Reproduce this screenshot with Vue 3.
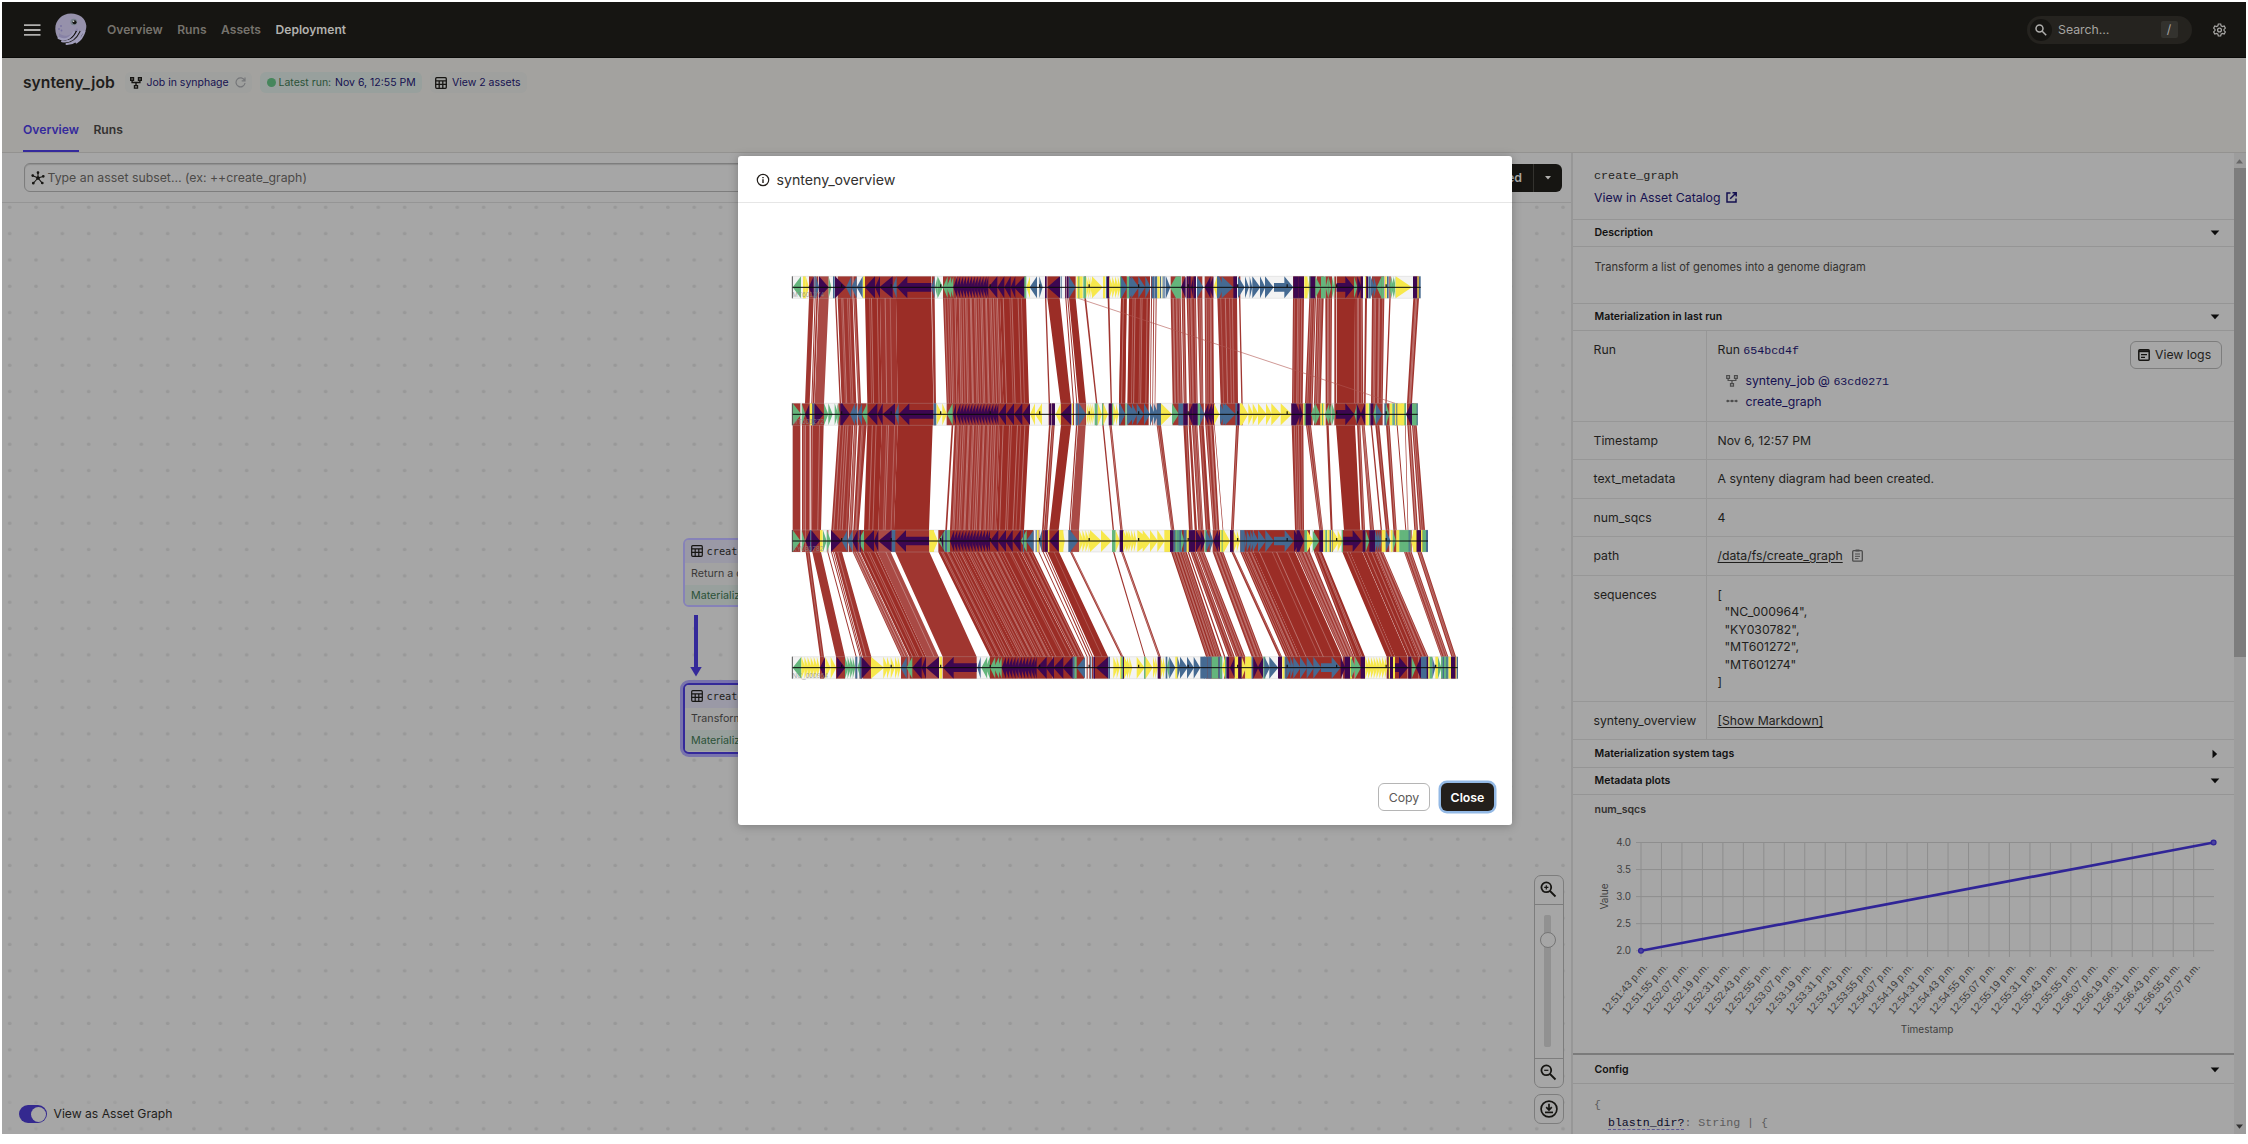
<script setup>
const navItems = ['Overview', 'Runs', 'Assets', 'Deployment']

// Gene features per track: start, end, colour, shape.
// Shapes: < > arrowheads, L R long arrows with a shaft, | plain bars; an optional count repeats the shape.
const colors = { g: '#64b57c', p: '#3d0751', b: '#456a92', y: '#f7e84b' }
const parseFeatures = (text, offset) =>
  text.split(',').flatMap((item) => {
    const [a, b, kind, n] = item.trim().split(' ')
    const count = n ? +n : 1
    const x0 = +a + offset
    const step = (+b - +a) / count
    return Array.from({ length: count }, (_, i) => ({
      fill: colors[kind[0]],
      points: shape(x0 + i * step, x0 + (i + 1) * step + (i < count - 1 ? step * 0.35 : 0), kind[1]),
    }))
  })
function shape(a, b, s) {
  if (s === '>') return `${a},0 ${b},33 ${a},66`
  if (s === '<') return `${b},0 ${a},33 ${b},66`
  if (s === 'L') return `${a},33 ${a + 32},0 ${a + 32},20 ${b},20 ${b},46 ${a + 32},46 ${a + 32},66`
  if (s === 'R') {
    const h = b - 27
    return `${b},33 ${h},0 ${h},20 ${a},20 ${a},46 ${h},46 ${h},66`
  }
  return `${a},0 ${b},0 ${b},66 ${a},66`
}

const tracks = [
  {
    name: 'MT601274', y: 110, end: 1952,
    left: '68 93 g<,99 107 y|,107 117 y>,116 131 p<,133 137 b|,138 147 b>,147 176 p>,176 184 g>,189 194 b|,195 228 p>,228 244 b<,244 260 b<,260 278 b<,279 285 y|,285 315 p<,315 330 p<,328 368 p<,368 380 b<,380 484 pL,484 494 b<,495 503 g<,503 519 g>,519 550 g< 3,550 655 p< 12,655 682 p<,682 703 p<,703 722 p<,722 736 p<,732 764 p<,763 769 g|,769 780 y<,779 801 b<,808 818 b>,825 830 p|,832 870 p<,872 875 b|,886 889 p|,891 896 p|,897 917 b>,920 938 y|,925 928 g|,940 948 g|,949 968 y> 3,966 998 y>,999 1006 y|,1008 1011 b|,1011 1018 p|,1018 1052 y> 4,1053 1070 b>,1071 1079 g|',
    right: '0 3 g|,4 22 b>,27 55 b>,34 57 b>,55 76 b>,76 92 b>,95 103 b|,104 112 b|,112 119 y|,120 123 b|,125 127 y|,128 131 b|,133 136 b|,138 151 b>,150 168 g<,168 183 g|,183 197 p<,200 205 p|,206 212 p|,213 220 p<,221 228 p|,231 250 b>,254 280 p< 2,281 291 y<,291 297 b|,297 312 b>,305 340 b>,340 351 p|,354 374 b>,375 387 b>,389 397 b>,397 421 b>,420 436 b>,435 461 b>,462 520 bR,520 535 p|,535 552 p|,553 562 y|,562 568 y>,568 573 g|,571 586 p|,586 603 g>,603 617 g|,617 625 g<,625 634 g>,636 646 g> 2,650 703 pR,702 712 g>,712 725 p>,722 729 p|,735 739 y|,739 744 p|,745 752 b|,752 770 b> 2,770 785 g<,784 792 g|,795 800 y|,801 806 b|,807 826 g< 3,827 876 y>,879 895 p|,892 896 y|,897 902 b|',
  },
  {
    name: 'MT601272', y: 491, end: 1943,
    left: '68 94 g>,95 106 g>,105 119 p<,119 126 y|,127 133 b|,134 161 p>,162 175 g>,175 188 g>,194 210 g> 2,211 218 p|,216 240 p>,240 262 b< 2,262 276 b<,276 292 g<,292 322 p<,322 338 p<,338 375 p<,375 386 b<,386 490 pL,491 499 b|,500 517 y>,517 531 y>,531 548 g<,549 558 p<,559 685 p< 14,685 708 p<,708 732 p<,732 757 p<,757 780 p<,780 795 y<,795 816 y<,838 843 p|,845 855 p|,857 872 y<,872 904 p<,906 909 y|,917 925 b|,927 948 b>,950 973 y> 4,974 982 g|,984 996 y>,996 1000 g|,1000 1014 y>,1016 1025 p|,1026 1030 g|,1030 1046 y> 2,1047 1066 b>,1066 1070 g|,1072 1080 b>',
    right: '0 15 b>,22 50 b>,36 52 b>,50 72 b>,72 90 b>,90 123 b> 3,112 123 b|,123 156 y>,156 177 g>,175 190 b|,190 203 p|,205 218 p<,218 234 p|,233 240 g|,240 253 b>,252 282 p< 3,282 298 y>,300 315 b>,308 346 b>,315 346 b>,346 352 b|,352 359 p|,360 366 y|,366 385 y>,385 400 y>,398 416 y>,414 440 y>,438 456 y>,454 484 y>,482 516 y>,514 528 p|,528 548 p> 2,550 557 y|,553 559 g|,557 573 p|,573 586 g<,586 600 g>,601 613 y|,606 609 g|,615 634 g< 2,636 646 g>,648 703 pR,703 712 g<,710 724 p>,722 735 p<,738 746 y|,747 750 g|,751 760 p|,760 768 g<,768 786 b>,793 800 b|,798 808 g>,809 817 y|,817 822 g|,823 832 b|,825 829 y|,832 856 y| 2,853 858 g|,858 873 p<,873 881 p|,876 893 g|,890 893 b|',
  },
  {
    name: 'KY030782', y: 871, end: 1974,
    left: '68 92 g>,95 105 g>,106 120 p<,120 124 b|,124 150 p>,150 158 y|,159 170 g>,170 183 g>,183 215 p>,215 232 b<,232 248 b<,247 263 p<,264 282 g<,268 272 p|,282 312 p<,312 325 p<,325 365 p<,365 376 b|,376 477 pL,478 492 y|,490 504 y>,504 525 g<,514 520 p<,525 532 b|,531 540 g|,540 660 p< 13,660 685 p<,683 708 p<,706 728 p<,728 752 p<,752 770 g<,759 762 b|,768 791 b<,797 800 b|,801 806 y|,806 816 b<,820 823 p|,825 833 p|,834 838 y|,838 866 p<,867 880 y|,878 884 y>,895 903 b|,900 925 b>,928 965 y> 4,960 995 y>,993 1025 y>,1026 1037 g|,1037 1050 y>,1049 1060 p|,1060 1080 y> 2',
    right: '0 8 p|,9 50 y> 5,52 94 y>,68 94 y>,90 114 y>,112 134 y>,133 151 y|,150 160 p|,160 166 b|,166 175 g|,173 186 b|,175 178 g|,183 193 g>,191 200 b|,200 206 y|,207 225 p| 2,228 256 p> 2,254 260 g|,258 280 b> 2,280 300 p< 2,300 312 y|,305 308 g|,312 330 y>,330 341 p|,341 360 y> 2,361 373 b|,373 380 b>,380 402 b> 2,398 416 b>,414 438 b>,436 462 b>,462 521 bR,522 552 p> 2,530 538 p|,553 561 g|,561 580 y>,578 598 g>,598 610 p|,610 616 y|,616 621 g|,622 629 y|,629 638 b|,633 636 y|,638 668 y> 2,665 669 g|,670 725 pR,728 736 p|,737 748 g>,748 765 p| 2,765 785 b> 3,785 797 y|,797 812 b>,812 818 y|,818 828 g>,829 838 y|,838 872 g| 3,866 869 b|,873 882 y<,880 890 y|,890 903 p|,903 908 y|,908 918 g|,918 924 b|',
  },
  {
    name: 'NC_000964', y: 1251, end: 2063,
    left: '68 94 g<,94 150 y> 6,150 165 p<,166 182 y>,182 199 y>,200 226 p>,225 256 g> 4,256 262 b|,262 272 g<,269 275 b|,275 304 p>,303 342 y>,340 362 y> 2,362 375 y>,375 392 y> 2,392 410 b<,410 427 g<,427 455 p<,455 468 p<,468 507 p<,508 516 y|,519 620 pL,622 632 b<,634 660 g< 2,660 695 g< 3,695 800 p< 11,800 830 p<,828 852 p<,850 880 p<,878 908 p<,908 914 b|,914 920 g|,920 945 b<,961 964 b|,970 975 p|,978 1015 p<,1015 1020 b|,1030 1050 y> 2,1051 1056 g|,1055 1062 p|,1062 1080 y> 2',
    right: '0 5 y|,5 9 g|,9 12 p|,12 30 y>,28 37 y>,50 74 y>,72 77 g|,77 98 y>,99 113 y> 2,113 122 p|,122 136 y> 2,137 142 b|,140 148 g<,148 166 b>,166 173 y|,172 182 b>,180 203 b>,201 222 b>,221 241 b>,241 262 b| 2,262 275 b| 2,275 295 g|,295 305 b|,300 307 g|,306 315 y<,315 319 g|,319 327 p|,330 345 p<,344 354 y|,355 366 p|,365 378 y>,376 394 y| 2,395 400 b|,400 415 p>,413 430 p<,430 436 g|,433 450 b>,448 475 b>,474 486 p|,487 494 y|,494 500 b|,500 522 b> 2,520 542 b>,540 562 b>,560 582 b>,580 604 b>,603 662 bR,662 676 p>,674 692 p|,690 696 y|,692 708 g>,705 723 g>,722 735 p|,736 803 y> 8,803 820 p|,806 810 y|,819 825 y|,825 864 pR,865 874 p|,875 888 g>,888 903 p<,903 925 b| 2,920 924 p|,925 930 y|,929 937 g|,937 946 b>,946 954 y|,954 964 g>,963 985 g| 2,968 972 b|,979 983 b|,986 993 y|,993 1006 p|,1007 1010 y|,1010 1014 b|',
  },
].map((t) => ({
  ...t,
  features: [...parseFeatures(t.left, 0), ...parseFeatures(t.right, 1050)],
  ticks: Array.from({ length: 13 }, (_, i) => 215 + i * 148.5).filter((x) => x < t.end),
}))

// Homology links between neighbouring tracks: top start/end, bottom start/end, seams, shade.
const shades = { d: '#9b2d26', m: '#a03630', l: '#a94a45' }
const parseLinks = (text, offset, row) =>
  text.split(',').map((item) => {
    const [a0, a1, b0, b1, n, shade] = item.trim().split(' ')
    const [ta, tb, ba, bb] = [a0, a1, b0, b1].map((v) => +v + offset)
    const top = tracks[row].y
    const bottom = tracks[row + 1].y
    const seams = Array.from({ length: +(n || 0) }, (_, i) => {
      const f = (i + 1 + 0.28 * Math.sin(i * 2.7 + ta)) / (+n + 1)
      const x = ta + (tb - ta) * f
      const u = ba + (bb - ba) * f
      return { d: `M${x} ${top + 66}L${u} ${bottom}`, o: 0.26 + 0.25 * Math.abs(Math.sin(i * 1.9 + tb)) }
    })
    return {
      fill: shades[shade || 'm'],
      points: `${ta},${top} ${tb},${top} ${tb},${top + 66} ${bb},${bottom} ${bb},${bottom + 66} ${ba},${bottom + 66} ${ba},${bottom} ${ta},${top + 66}`,
      seams,
    }
  })
const links = [
  ...parseLinks('117 131 105 119,134 137 124 127,139 144 128 133,146 176 134 162 0 l,195 199 209 213,203 248 215 259 4,250 260 264 273 1,285 330 292 335 3 d,330 378 335 383 2,378 484 383 490 0 d,486 494 491 498,519 560 530 565 5,560 690 565 700 19,690 768 700 777 5 d,825 829 836 840,832 869 872 903 0 d,886 889 909 912,892 895 919 922,897 917 926 948 0 d,943 948 978 982,1013 1018 1022 1026,1053 1070 1048 1066 0 d', 0, 0),
  ...parseLinks('3 20 -3 15 1 d,27 90 22 86 5 d,93 96 90 92,100 103 97 99,107 110 104 106,152 182 158 188 5,185 195 191 200 1,200 228 208 233 4,232 247 240 250 2,254 280 256 282 4,292 351 302 354 4,357 361 364 368,519 552 516 548 4,568 588 555 578 3,590 611 582 602 3,616 636 617 634 3,643 649 643 649,651 705 651 703 0 d,705 728 703 730 3,735 741 732 737,756 793 753 788 5,808 812 796 800,880 897 861 876 2', 1050, 0),
  ...parseLinks('68 91 68 91,96 105 96 105 1,106 119 106 119,122 126 122 125,127 161 126 153 1,205 250 184 235 5,252 262 237 247 2,266 290 250 266 2,292 335 282 325 2 d,335 383 325 372 3,383 488 372 477 0 d,545 550 526 531,554 690 540 680 20,690 778 680 762 6 d,837 842 816 821,845 854 822 832 1,873 903 838 866 0 d,918 922 897 900,924 947 902 927 0 l,997 1001 1028 1032,1018 1025 1051 1058 1', 0, 1),
  ...parseLinks('110 123 153 163 2,190 203 207 218 1,206 213 224 231,216 232 235 250 3,237 251 257 271 1,256 280 279 298 3,282 284 308 310,348 357 333 341 1,515 550 525 552 4,558 573 598 609 2,619 626 632 638,648 705 672 721 0 d,711 721 725 735 1,725 734 750 762 2,752 756 782 786,766 778 797 808 1,798 809 820 830 1,830 833 856 859,855 857 863 865,862 873 883 894 2,876 890 899 915 2', 1050, 1),
  ...parseLinks('107 119 150 162 1,127 153 198 225,172 175 257 260,183 186 269 272,189 192 273 276,194 216 278 304 1,248 268 393 416 5,270 322 418 468 4 d,322 362 468 506 1 l,376 478 518 620,505 585 660 745 9 d,585 690 745 848 14 d,690 752 848 912 4 d,753 790 913 942 4 d,805 808 950 953,818 821 958 962,826 829 966 969,832 867 973 1014 1 d,900 907 1053 1060 1,1029 1033 1123 1126,1053 1060 1165 1172 1', 0, 2),
  ...parseLinks('153 200 258 305 9 d,203 207 312 316,211 228 325 344 2,230 253 348 376 4,278 310 395 428 5,334 342 477 486 1,361 400 497 540 6 d,400 525 540 665 4 d,527 570 668 702 7,582 606 703 735 3 d,667 690 800 825 1 d,690 727 825 863 0 d,728 765 864 895 2 d,765 790 895 925 4,852 875 963 985 4,892 905 994 1008 2', 1050, 2),
]

const axisValues = ['4.0', '3.5', '3.0', '2.5', '2.0']
const times = Array.from({ length: 28 }, (_, i) => {
  const s = 51 * 60 + 43 + i * 12
  return `12:${Math.floor(s / 60)}:${String(s % 60).padStart(2, '0')} p.m.`
})
</script>

<template>
  <div class="page">
    <div class="app">
      <header class="topbar">
        <svg class="burger" width="17" height="12" viewBox="0 0 17 12"><path d="M0 1.2h16.5M0 6h16.5M0 10.8h16.5" stroke="#b0afad" stroke-width="1.8" /></svg>
        <svg class="logo" width="32" height="33" viewBox="0 0 32 33">
          <path d="M16 .6C7 .6.3 7.300 .3 15.800c0 4.700 1.700 8.600 4.400 11.200C10 31.500 20 30.500 26 24.500 30 21 31.600 16 31.300 12.500 30.500 5.500 24.500 .6 16 .6z" fill="#9691ab" />
          <path d="M4 20c3 3 8 4 12 1 3-2 5-4 6-6 2 3 1 8-5 11-5 2-10 1-13-1z" fill="#8782a6" />
          <path d="M3 26.500c6 3 13 2 18.500-8.500M7 29.500c8 1 14-3 18-11.500M13.500 32c7-.5 12-5 15.300-13" stroke="#161512" stroke-width="1.500" fill="none" />
          <path d="M3.500 25c6 3 12 .5 15.500-6M7 28.200c7 1.300 13-2.500 16.500-10M11.500 31c7 .2 12.500-4.500 16-12.500M21.500 29.500c4-2.500 6.500-6 8-11" stroke="#a19ebb" stroke-width="2" stroke-linecap="round" fill="none" />
          <circle cx="18.800" cy="9" r="3.300" fill="#75808b" /><circle cx="19.500" cy="9.200" r="2" fill="#161512" /><circle cx="18.600" cy="8.300" r=".8" fill="#ddd" />
          <circle cx="6" cy="13" r=".9" fill="#7671a0" /><circle cx="4" cy="16" r=".9" fill="#7671a0" /><circle cx="6.500" cy="17.500" r=".9" fill="#7671a0" />
        </svg>
        <nav>
          <a v-for="item in navItems" :key="item" :class="{ active: item === 'Deployment' }">{{ item }}</a>
        </nav>
        <div class="search">
          <span class="search-icon"><svg width="12" height="12" viewBox="0 0 12 12" fill="none" stroke="#b0afad" stroke-width="1.500"><circle cx="4.500" cy="4.500" r="3.500" /><path d="M7.200 7.200l4 4" /></svg></span>
          <span class="search-text">Search…</span><kbd>/</kbd>
        </div>
        <svg class="gear" width="13" height="14" viewBox="0 0 13 14" fill="none" stroke="#a9a8a6"><circle cx="6.500" cy="7" r="1.900" stroke-width="1.300" /><path d="M5.300 1h2.400l.4 1.800 1.300.8 1.800-.6 1.200 2.100-1.400 1.300v1.200l1.400 1.300-1.200 2.100-1.800-.6-1.300.8-.4 1.800H5.300l-.4-1.800-1.300-.8-1.800.6L.6 8.900 2 7.600V6.400L.6 5.100 1.800 3l1.800.6 1.300-.8z" stroke-width="1.200" /></svg>
      </header>

      <section class="pagehead">
        <div class="title-row">
          <h1>synteny_job</h1>
          <span class="chip job">
            <svg width="12" height="12" viewBox="0 0 12 12" fill="none" stroke="#161512" stroke-width="1.400"><path d="M.7.7h2.800v2.600H.7zM8.500.7h2.800v2.600H8.500zM4.500 8.600h3v2.500h-3zM2.100 3.300v2.200h7.800V3.300M6 5.500v3.100" /></svg>
            <span>Job in synphage</span>
            <svg width="11" height="11" viewBox="0 0 11 11" fill="none" stroke="#76777a" stroke-width="1.200"><path d="M9.600 3.400A4.500 4.500 0 1 0 10 6M10 .5v3.300H6.700" /></svg>
          </span>
          <span class="chip latest"><i></i><em>Latest run:</em> <b>Nov 6, 12:55 PM</b></span>
          <span class="chip assets">
            <svg width="12" height="12" viewBox="0 0 12 12" fill="none" stroke="#161512" stroke-width="1.300"><rect x=".7" y=".7" width="10.600" height="10.600" rx="1" /><path d="M.7 3.800h10.600M.7 7.400h10.600M4.200 3.800v7.500M7.800 3.800v7.500" /></svg>
            <span>View 2 assets</span>
          </span>
        </div>
        <div class="tabs"><span class="tab on">Overview</span><span class="tab">Runs</span></div>
      </section>

      <main>
        <section class="graph">
          <div class="toolbar">
            <div class="subset">
              <svg width="14" height="14" viewBox="0 0 14 14" stroke="#161512" stroke-width="1.100" fill="#161512"><path d="M7 7V1.800M7 7l5-1.500M7 7L2 4.800M7 7l-4.500 5M7 7l4 4.800" /><circle cx="7" cy="7" r="1.300" /><circle cx="7" cy="1.600" r=".8" /><circle cx="12.300" cy="5.300" r=".8" /><circle cx="1.700" cy="4.600" r=".8" /><circle cx="2.300" cy="12.200" r=".8" /><circle cx="11.300" cy="12" r=".8" /></svg>
              <span>Type an asset subset… (ex: ++create_graph)</span>
            </div>
            <div class="materialize"><span>Materialize selected</span><i><svg width="6" height="4" viewBox="0 0 6 4"><path d="M0 0h6L3 3.500z" fill="#b0afad" /></svg></i></div>
          </div>
          <div class="canvas">
            <div class="node first">
              <div class="node-head"><svg width="12" height="12" viewBox="0 0 12 12" fill="none" stroke="#161512" stroke-width="1.200"><rect x=".7" y=".7" width="10.600" height="10.600" rx="1" /><path d="M.7 3.800h10.600M.7 7.400h10.600M4.200 3.800v7.500M7.800 3.800v7.500" /></svg>create_db</div>
              <div class="node-body">Return a dataset</div>
              <div class="node-foot">Materialized</div>
            </div>
            <svg class="arrow" width="12" height="62" viewBox="0 0 12 62"><path d="M6 0v53" stroke="#34299a" stroke-width="4" /><path d="M.3 52h11.400L6 61.500z" fill="#34299a" /></svg>
            <div class="node second">
              <div class="node-head"><svg width="12" height="12" viewBox="0 0 12 12" fill="none" stroke="#161512" stroke-width="1.200"><rect x=".7" y=".7" width="10.600" height="10.600" rx="1" /><path d="M.7 3.800h10.600M.7 7.400h10.600M4.200 3.800v7.500M7.800 3.800v7.500" /></svg>create_graph</div>
              <div class="node-body">Transform a list of</div>
              <div class="node-foot">Materialized</div>
            </div>
            <div class="zoomer">
              <div class="zbtn"><svg width="17" height="17" viewBox="0 0 17 17" fill="none" stroke="#161512" stroke-width="1.800"><circle cx="6.300" cy="6.300" r="4.900" /><path d="M10 10l5.500 5.500" /><path d="M6.300 4.200v4.200M4.200 6.300h4.200" stroke-width="1.200" /></svg></div>
              <div class="ztrack"><div class="rail"><i></i></div></div>
              <div class="zbtn"><svg width="17" height="17" viewBox="0 0 17 17" fill="none" stroke="#161512" stroke-width="1.800"><circle cx="6.300" cy="6.300" r="4.900" /><path d="M10 10l5.500 5.500" /><path d="M4.200 6.300h4.200" stroke-width="1.200" /></svg></div>
            </div>
            <div class="download"><svg width="18" height="18" viewBox="0 0 18 18" fill="none" stroke="#161512" stroke-width="1.700"><circle cx="9" cy="9" r="7.900" /><path d="M9 3.800v5.700M6.200 7.200L9 10l2.800-2.800" /><path d="M5 12.400h8" /></svg></div>
            <div class="toggle"><span class="switch"><i></i></span><span>View as Asset Graph</span></div>
          </div>
        </section>

        <aside>
          <div class="side">
            <div class="side-head">
              <div class="mono asset-name">create_graph</div>
              <div class="link catalog">View in Asset Catalog <svg width="11" height="11" viewBox="0 0 11 11" fill="none" stroke="#151050" stroke-width="1.500"><path d="M4.500 1H1v9h9V6.500M6.500 .8h3.700v3.700M10 1L4.200 6.800" /></svg></div>
            </div>
            <div class="bar">Description<svg width="10" height="6" viewBox="0 0 10 6"><path d="M.7.5h8.600L5 5.200z" /></svg></div>
            <div class="desc">Transform a list of genomes into a genome diagram</div>
            <div class="bar">Materialization in last run<svg width="10" height="6" viewBox="0 0 10 6"><path d="M.7.5h8.600L5 5.200z" /></svg></div>
            <div class="table">
              <div class="row run">
                <div class="key">Run</div>
                <div class="val">
                  <div>Run <span class="mono link">654bcd4f</span></div>
                  <div class="sub s1"><svg width="12" height="12" viewBox="0 0 12 12" fill="none" stroke="#4c4c4c" stroke-width="1.200"><path d="M.7.7h2.800v2.600H.7zM8.500.7h2.800v2.600H8.500zM4.500 8.600h3v2.500h-3zM2.100 3.300v2.200h7.800V3.300M6 5.500v3.100" /></svg><span class="link">synteny_job @ <span class="mono">63cd0271</span></span></div>
                  <div class="sub"><svg width="12" height="4" viewBox="0 0 12 4" fill="#4c4c4c"><path d="M1 1.600h10v.8H1z" /><circle cx="1.700" cy="2" r="1.300" /><circle cx="6" cy="2" r="1.300" /><circle cx="10.300" cy="2" r="1.300" /></svg><span class="link">create_graph</span></div>
                </div>
                <div class="logs"><svg width="12" height="12" viewBox="0 0 12 12" fill="none" stroke="#161512" stroke-width="1.500"><rect x=".8" y=".8" width="10.400" height="10.400" rx="1" /><path d="M1 2.200h10" stroke-width="2" /><path d="M3 5.600h6M3 8.300h4" stroke-width="1.200" /></svg>View logs</div>
              </div>
              <div class="row h38"><div class="key">Timestamp</div><div class="val">Nov 6, 12:57 PM</div></div>
              <div class="row h39"><div class="key">text_metadata</div><div class="val">A synteny diagram had been created.</div></div>
              <div class="row h38"><div class="key">num_sqcs</div><div class="val">4</div></div>
              <div class="row h39"><div class="key">path</div><div class="val"><u>/data/fs/create_graph</u><svg class="clip" width="11" height="13" viewBox="0 0 11 13" fill="none" stroke="#4c4c4c" stroke-width="1.300"><rect x=".7" y="1.700" width="9.600" height="10.500" rx="1" /><path d="M3.500 1.500h4" stroke-width="2" /><path d="M3 5h5M3 7.300h5M3 9.600h3.500" stroke-width="1" /></svg></div></div>
              <div class="row seq"><div class="key">sequences</div><pre class="val">[
  "NC_000964",
  "KY030782",
  "MT601272",
  "MT601274"
]</pre></div>
              <div class="row h38"><div class="key">synteny_overview</div><div class="val"><u>[Show Markdown]</u></div></div>
            </div>
            <div class="bar tags">Materialization system tags<svg width="6" height="10" viewBox="0 0 6 10"><path d="M.5.7v8.600L5.200 5z" /></svg></div>
            <div class="bar">Metadata plots<svg width="10" height="6" viewBox="0 0 10 6"><path d="M.7.5h8.600L5 5.200z" /></svg></div>
            <div class="plot">
              <div class="plot-title">num_sqcs</div>
              <svg width="660" height="230" viewBox="1573 823 660 230">
                <g stroke="#8e8e8e" stroke-width="1">
                  <path v-for="i in 28" :key="i" :d="`M${1641 + (i - 1) * 20.47} 842.5V957`" />
                  <path v-for="i in 5" :key="i" :d="`M1636 ${842.5 + (i - 1) * 27.05}H2214`" />
                </g>
                <path d="M1641 950.700L2213.600 842.500" stroke="#302597" stroke-width="2.600" />
                <circle cx="1641" cy="950.700" r="2.400" fill="#4b42a2" stroke="#302597" stroke-width="1.300" />
                <circle cx="2213.600" cy="842.500" r="2.400" fill="#4b42a2" stroke="#302597" stroke-width="1.300" />
                <g class="ticks">
                  <text v-for="(v, i) in axisValues" :key="v" x="1631" :y="845.500 + i * 27.05" text-anchor="end">{{ v }}</text>
                  <text v-for="(t, i) in times" :key="t" class="time" :transform="`translate(${1648 + i * 20.47} 967) rotate(-49)`" text-anchor="end">{{ t }}</text>
                  <text class="axis" transform="translate(1607.500 896.500) rotate(-90)" text-anchor="middle">Value</text>
                  <text class="axis" x="1927" y="1032.500" text-anchor="middle">Timestamp</text>
                </g>
              </svg>
            </div>
            <div class="bar config">Config<svg width="10" height="6" viewBox="0 0 10 6"><path d="M.7.5h8.600L5 5.200z" /></svg></div>
            <pre class="code">{
  <b>blastn_dir?</b>: String | {</pre>
          </div>
          <div class="scroll"><svg width="7" height="5" viewBox="0 0 7 5"><path d="M0 4.500h7L3.500 .3z" fill="#666" /></svg><i></i><svg width="7" height="5" viewBox="0 0 7 5"><path d="M0 .5h7L3.500 4.700z" fill="#333" /></svg></div>
        </aside>
      </main>
    </div>

    <div class="modal">
      <div class="modal-head">
        <svg width="14" height="14" viewBox="0 0 14 14" fill="none" stroke="#231f1b" stroke-width="1.200"><circle cx="7" cy="7" r="5.700" /><path d="M7 6.300v3.800M7 3.900v1.300" stroke-width="1.400" /></svg>
        synteny_overview
      </div>
      <div class="modal-body">
        <svg class="diagram" width="700" height="410" viewBox="0 100 2100 1230">
          <path v-for="t in tracks" :key="t.name" :d="`M66 ${t.y}H${t.end}v66H66z`" fill="#f3f3f3" />
          <g v-for="(l, i) in links" :key="i">
            <polygon :points="l.points" :fill="l.fill" />
            <path v-for="(s, j) in l.seams" :key="j" :d="s.d" stroke="#fff" stroke-width="2" :opacity="s.o" />
          </g>
          <path d="M925 176L1875 491" stroke="#b0544f" stroke-width="1.800" />
          <g v-for="t in tracks" :key="t.name" :transform="`translate(0 ${t.y})`">
            <polygon v-for="(f, i) in t.features" :key="i" :points="f.points" :fill="f.fill" />
            <path :d="`M66 0H${t.end}M66 66H${t.end}`" stroke="#bbb" stroke-width="1.500" opacity=".55" />
            <text x="67" y="63" class="track-name">{{ t.name }}</text>
            <path :d="`M67 33H${t.end}`" stroke="#0a0a0a" stroke-width="3" />
            <path d="M67 0V66" stroke="#333" stroke-width="2.500" />
            <path v-for="x in t.ticks" :key="x" :d="`M${x} 33V24`" stroke="#111" stroke-width="3.500" />
          </g>
        </svg>
      </div>
      <div class="modal-foot"><button class="copy">Copy</button><button class="close">Close</button></div>
    </div>
  </div>
</template>

<style>
body { background: #fff; overflow: hidden; }
</style>

<style scoped>
* { box-sizing: border-box; }
.page { position: relative; width: 2248px; height: 1144px; padding: 2px; overflow: hidden; background: #fff; font: 12.3px/17.5px Inter, "Liberation Sans", sans-serif; color: #1f1e1c; }
.app { width: 2244px; height: 1132px; overflow: hidden; background: #a6a6a6; display: flex; flex-direction: column; }
svg { display: block; flex: none; }
.mono { font-family: "Liberation Mono", monospace; font-size: 11.6px; }
.asset-name { font-size: 11.75px; }
.link { color: #151050; }

.topbar { height: 56px; flex: none; display: flex; align-items: center; background: #161512; border-bottom: 1px solid #0a0a08; padding: 0 20px 0 21.500px; }
.logo { margin-left: 14px; }
nav { display: flex; gap: 14.500px; margin-left: 20.500px; padding-top: 1px; font-size: 12.100px; font-weight: 600; color: #75726c; }
nav .active { color: #b2b1ae; }
.search { margin-left: auto; width: 165px; height: 28px; border-radius: 14px; background: #25231f; display: flex; align-items: center; padding: 0 14px 0 3px; color: #a7a5a1; }
.search-icon { width: 22px; height: 22px; border-radius: 50%; background: #161512; display: grid; place-items: center; margin-right: 6.500px; }
kbd { margin-left: auto; width: 17px; height: 17px; border-radius: 2px; background: #33322e; font: inherit; text-align: center; }
.gear { margin-left: 21.500px; }

.pagehead { height: 95px; flex: none; background: #a3a29f; border-bottom: 1px solid #939290; padding: 14px 21px 0; display: flex; flex-direction: column; justify-content: space-between; }
.title-row { display: flex; align-items: center; height: 21px; }
h1 { margin: 0 10px 0 0; font-size: 15.700px; font-weight: 600; width: 92px; padding-top: 1px; }
.chip { height: 21px; border-radius: 6px; display: flex; align-items: center; background: #9fa09e; color: #151050; font-size: 10.500px; white-space: nowrap; }
.job { width: 127px; padding-left: 5px; margin-right: 8px; gap: 4.500px; }
.job svg:last-child { margin-left: 2px; }
.latest { width: 162px; padding-left: 6.500px; margin-right: 8px; background: #98a09d; }
.latest i { width: 9px; height: 9px; border-radius: 50%; background: #46865c; margin-right: 3px; }
.latest em { font-style: normal; color: #2b5238; margin-right: 4px; }
.latest b { font-weight: 400; }
.assets { width: 97px; padding-left: 5px; gap: 5px; }
.tabs { display: flex; gap: 14.500px; font-size: 12.150px; font-weight: 600; color: #33312f; }
.tab { height: 33px; padding-top: 2px; }
.tab.on { color: #352a9c; border-bottom: 2px solid #352a9c; }

main { flex: 1; display: flex; min-height: 0; }
.graph { width: 1569px; display: flex; flex-direction: column; }
.toolbar { height: 50px; flex: none; border-bottom: 1px solid #959595; display: flex; align-items: center; gap: 12px; padding: 0 9.500px 0 21.500px; }
.subset { flex: 1; height: 29px; border: 1px solid #7d7d7d; border-radius: 6px; display: flex; align-items: center; gap: 3px; padding-left: 6px; font-size: 12.300px; color: #4c4a48; box-shadow: inset 0 1px 1px #8f8f8f; }
.materialize { height: 28px; border-radius: 6px; background: #161512; color: #a9a8a6; display: flex; align-items: center; font-weight: 600; }
.materialize span { padding: 0 10.500px; border-right: 1px solid #33322e; line-height: 28px; }
.materialize i { width: 28px; display: grid; place-items: center; }
.canvas { flex: 1; position: relative; background: radial-gradient(circle at 7.700px 4.300px, #989898 1.400px, transparent 2.100px) 0 0 / 26.33px 26.33px; }

.node { position: absolute; width: 200px; border-radius: 6px; overflow: hidden; background: #a6a6a6; }
.first { left: 680.500px; top: 335px; height: 69px; border: 2px solid #8682b8; }
.second { left: 680.500px; top: 480px; height: 71px; border: 2px solid #34299a; box-shadow: 0 0 0 3px #7873ac; }
.node-head { height: 23px; background: #9a99a6; display: flex; align-items: center; gap: 4px; padding: 0 0 2px 6px; font: 10.300px "DejaVu Sans Mono", monospace; }
.node-body { height: 22px; line-height: 21px; padding-left: 6.500px; font-size: 10.700px; color: #3a3938; background: #a2a2a2; }
.node-foot { height: 21px; line-height: 21px; padding-left: 6.500px; font-size: 10.700px; color: #2b5238; background: #98a09d; }
.arrow { position: absolute; left: 688px; top: 411.500px; }
.zoomer { position: absolute; left: 1531.500px; top: 671.500px; width: 30px; height: 213px; border: 1px solid #7d7d7d; border-radius: 7px; background: #a6a6a6; }
.zbtn { height: 28px; display: grid; place-items: center; }
.ztrack { height: 155px; border: solid #7d7d7d; border-width: 1px 0; display: grid; justify-content: center; align-items: center; padding-right: 2px; }
.rail { width: 7px; height: 132px; border-radius: 2px; background: #919191; position: relative; }
.rail i { position: absolute; left: -4.500px; top: 17px; width: 16px; height: 16px; border: 1.500px solid #757575; border-radius: 50%; background: #a6a6a6; }
.download { position: absolute; left: 1531.500px; top: 891px; width: 30px; height: 30px; border: 1px solid #7d7d7d; border-radius: 7px; background: #a6a6a6; display: grid; place-items: center; }
.toggle { position: absolute; left: 5px; top: 893px; width: 178px; height: 36px; padding-left: 12px; display: flex; align-items: center; gap: 6.500px; background: rgba(166, 166, 166, .55); font-size: 12.150px; }
.switch { width: 28px; height: 18px; border-radius: 9px; background: #34298f; padding: 1.500px; display: flex; justify-content: flex-end; }
.switch i { width: 15px; height: 15px; border-radius: 50%; background: #a6a6a6; }

aside { flex: 1; border-left: 2px solid #979797; display: flex; min-width: 0; }
.side { width: 660.500px; overflow: hidden; font-size: 12.250px; }
.scroll { flex: 1; background: #9d9d9d; display: flex; flex-direction: column; align-items: center; padding: 6px 0 5px; justify-content: space-between; }
.scroll i { width: 100%; height: 489px; background: #7d7d7d; margin: 4px 0 auto; }
.side-head { height: 67px; border-bottom: 1px solid #959595; padding: 14.500px 21px 0; }
.catalog { display: flex; align-items: center; gap: 5px; margin-top: 3.500px; font-size: 12.300px; }
.bar { height: 27px; border-bottom: 1px solid #959595; padding: 0 14px 0 21.500px; display: flex; align-items: center; justify-content: space-between; font-weight: 600; font-size: 10.500px; color: #111; }
.bar svg { fill: #0c0c0c; }
.tags { height: 28px; }
.tags svg { margin-right: 2px; }
.desc { height: 57px; border-bottom: 1px solid #959595; padding: 12px 21.500px; font-size: 11.150px; color: #33312f; }
.row { display: flex; border-bottom: 1px solid #979797; position: relative; }
.key { width: 134px; padding: 9.700px 0 0 20.500px; border-right: 1px solid #979797; }
.val { margin: 0; padding: 9.700px 0 0 10.500px; font: inherit; }
.run { height: 91px; }
.h38 { height: 38px; } .h39 { height: 39px; } .seq { height: 126px; }
.h38 .val, .h39 .val { display: flex; }
.clip { margin: 2px 0 0 9px; }
.sub { display: flex; align-items: center; gap: 8px; padding-left: 8px; margin-top: 2px; }
.s1 { margin-top: 13px; }
u { text-underline-offset: 2px; }
.logs { margin: 10px 12px 0 auto; width: 92px; height: 28px; border: 1px solid #7d7d7d; border-radius: 6px; display: flex; align-items: center; gap: 5px; padding-left: 7.500px; }
.plot { height: 258px; }
.plot-title { height: 28px; line-height: 29px; padding-left: 21.500px; font-size: 10.500px; font-weight: 600; color: #33312f; }
.ticks text { font-size: 9.900px; fill: #3f3f3f; }
.ticks .time { font: 10.400px "Liberation Sans", sans-serif; }
.ticks .axis { font-size: 10px; }
.config { height: 31px; border-top: 2px solid #7b7b7b; padding-top: 2px; }
.code { margin: 12px 0 0 21px; font: 11.600px/17.500px "Liberation Mono", monospace; color: #5c5c5c; }
.code b { font-weight: 400; color: #0d0d2a; border-bottom: 1px dashed #5d5796; }

.modal { position: absolute; left: 738px; top: 156px; width: 774px; height: 669px; border-radius: 3px; background: #fff; box-shadow: 0 1px 10px rgba(0, 0, 0, .25); display: flex; flex-direction: column; }
.modal-head { height: 47px; border-bottom: 1px solid #e6e6e6; display: flex; align-items: center; gap: 7px; padding: 1px 0 0 17.500px; font-size: 14.200px; color: #33312f; }
.modal-body { flex: 1; min-height: 0; padding: 70.300px 0 0 32px; }
.track-name { font: 20px "Liberation Sans", sans-serif; fill: #8b8b8b; opacity: .75; }
.modal-foot { height: 56px; display: flex; justify-content: flex-end; align-items: flex-start; gap: 11px; padding: 14px 18px 0; }
button { height: 28px; border-radius: 6px; font: 12.300px Inter, sans-serif; padding: 0; }
.copy { width: 52px; border: 1px solid #b5b5b5; background: #fff; color: #5c5a58; }
.close { width: 53px; border: 0; background: #231f1b; color: #fff; font-weight: 600; box-shadow: 0 0 0 2.500px #93b9e5; }
</style>
